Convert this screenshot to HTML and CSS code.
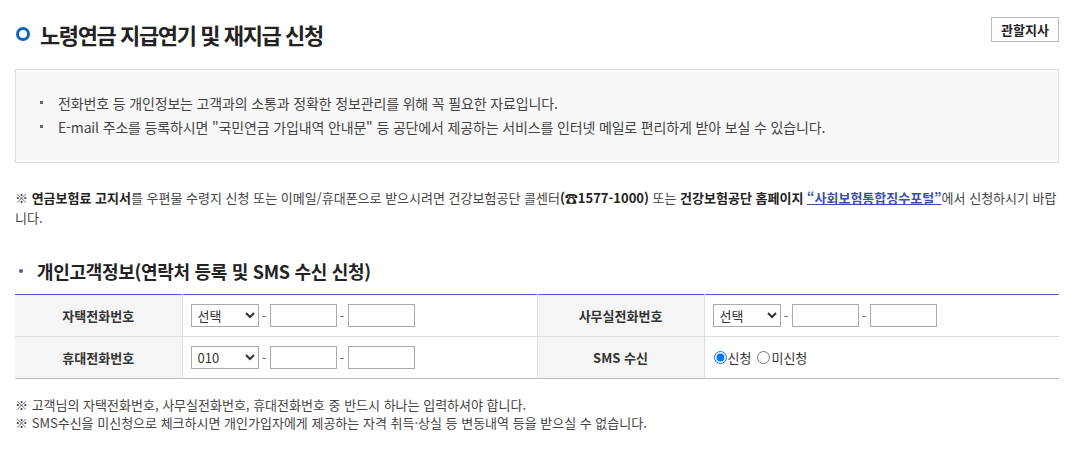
FILE: index.html
```html
<!DOCTYPE html>
<html lang="ko">
<head>
<meta charset="utf-8">
<title>노령연금 지급연기 및 재지급 신청</title>
<link rel="stylesheet" href="styles.css">
</head>
<body>
<div class="page">
  <div class="title-row">
    <h1 class="title"><span class="title-icon"></span>노령연금 지급연기 및 재지급 신청</h1>
    <button class="btn-branch" type="button">관할지사</button>
  </div>

  <div class="info-box">
    <ul class="info-list">
      <li>전화번호 등 개인정보는 고객과의 소통과 정확한 정보관리를 위해 꼭 필요한 자료입니다.</li>
      <li>E-mail 주소를 등록하시면 "국민연금 가입내역 안내문" 등 공단에서 제공하는 서비스를 인터넷 메일로 편리하게 받아 보실 수 있습니다.</li>
    </ul>
  </div>

  <p class="notice">※ <b>연금보험료 고지서</b>를 우편물 수령지 신청 또는 이메일/휴대폰으로 받으시려면 건강보험공단 콜센터<b>(☎1577-1000)</b> 또는 <b>건강보험공단 홈페이지</b> <a class="link" href="#">“사회보험통합징수포털”</a>에서 신청하시기 바랍니다.</p>

  <h2 class="sub-title"><span class="sub-dot"></span>개인고객정보(연락처 등록 및 SMS 수신 신청)</h2>

  <table class="form-table">
    <colgroup>
      <col class="c-th"><col class="c-td"><col class="c-th"><col class="c-td">
    </colgroup>
    <tbody>
      <tr>
        <th>자택전화번호</th>
        <td>
          <div class="phone">
            <select class="sel"><option>선택</option></select>
            <span class="dash">-</span>
            <input class="txt" type="text">
            <span class="dash">-</span>
            <input class="txt" type="text">
          </div>
        </td>
        <th>사무실전화번호</th>
        <td>
          <div class="phone">
            <select class="sel"><option>선택</option></select>
            <span class="dash">-</span>
            <input class="txt" type="text">
            <span class="dash">-</span>
            <input class="txt" type="text">
          </div>
        </td>
      </tr>
      <tr>
        <th>휴대전화번호</th>
        <td>
          <div class="phone">
            <select class="sel"><option>010</option></select>
            <span class="dash">-</span>
            <input class="txt" type="text">
            <span class="dash">-</span>
            <input class="txt" type="text">
          </div>
        </td>
        <th>SMS 수신</th>
        <td>
          <div class="radios">
            <label class="rad"><input type="radio" name="sms" checked>신청</label>
            <label class="rad"><input type="radio" name="sms">미신청</label>
          </div>
        </td>
      </tr>
    </tbody>
  </table>

  <div class="foot-notes">
    <p>※ 고객님의 자택전화번호, 사무실전화번호, 휴대전화번호 중 반드시 하나는 입력하셔야 합니다.</p>
    <p>※ SMS수신을 미신청으로 체크하시면 개인가입자에게 제공하는 자격 취득·상실 등 변동내역 등을 받으실 수 없습니다.</p>
  </div>
</div>
</body>
</html>
```

FILE: styles.css
```css
* { box-sizing: border-box; }
html, body { margin: 0; padding: 0; background: #fff; }
body {
  font-family: "Noto Sans CJK KR", "Noto Sans", sans-serif;
  color: #333;
  font-size: 13px;
}
.page {
  width: 1044px;
  margin-left: 15px;
  padding-top: 17px;
}
.title-row {
  display: flex;
  justify-content: space-between;
  align-items: flex-start;
  height: 52px;
}
.title {
  display: flex;
  align-items: center;
  margin: 0;
  padding-top: 1px;
  font-size: 22px;
  font-weight: 700;
  letter-spacing: -1.4px;
  color: #222;
  line-height: 32px;
}
.title-icon {
  display: inline-block;
  width: 14px;
  height: 14px;
  border: 3px solid #0a66c2;
  border-radius: 50%;
  margin-left: 1px;
  margin-right: 10px;
}
.btn-branch {
  width: 68px;
  height: 25px;
  padding: 0;
  border: 1px solid #bbb;
  background: #fff;
  font-family: inherit;
  font-size: 13px;
  font-weight: 700;
  color: #222;
  line-height: 23px;
}
.info-box {
  border: 1px solid #ddd;
  background: #f8f8f8;
  height: 94px;
  padding: 21px 0 0 24px;
}
.info-list {
  margin: 0;
  padding: 0;
  list-style: none;
}
.info-list li {
  position: relative;
  padding-left: 18px;
  line-height: 24px;
  font-size: 14px;
  letter-spacing: -0.15px;
  color: #444;
}
.info-list li::before {
  content: "";
  position: absolute;
  left: 0;
  top: 10px;
  width: 3px;
  height: 3px;
  background: #666;
}
.notice {
  margin: 25px 0 0;
  line-height: 20px;
  color: #444;
}
.notice b { color: #222; }
.link {
  color: #3a4fa8;
  font-weight: 700;
  text-decoration: underline;
}
.sub-title {
  display: flex;
  align-items: center;
  margin: 30px 0 0;
  font-size: 18px;
  font-weight: 700;
  letter-spacing: -0.3px;
  color: #222;
  line-height: 26px;
}
.sub-dot {
  display: inline-block;
  width: 4px;
  height: 4px;
  border-radius: 50%;
  background: #4a5fae;
  margin-left: 4px;
  margin-right: 14px;
}
.form-table {
  width: 100%;
  margin-top: 10px;
  border-collapse: collapse;
  table-layout: fixed;
  border-top: 1px solid #4b63c0;
  border-bottom: 1px solid #bbb;
}
.c-th { width: 167px; }
.c-td { width: 355px; }
.form-table th, .form-table td {
  height: 42px;
  border-bottom: 1px solid #ddd;
  font-size: 13px;
  vertical-align: middle;
}
.form-table tr:last-child th, .form-table tr:last-child td { border-bottom: 0; }
.form-table th {
  background: #f5f5f5;
  font-weight: 700;
  color: #333;
  text-align: center;
  border-right: 1px solid #ddd;
}
.form-table td {
  padding: 0 8px;
  border-right: 1px solid #ddd;
}
.form-table td:last-child { border-right: 0; }
.phone {
  display: flex;
  align-items: center;
}
.sel {
  width: 68px;
  height: 23px;
  border: 1px solid #aaa;
  border-radius: 0;
  background: #fff;
  font-family: "Noto Sans CJK KR", sans-serif;
  font-size: 13px;
  color: #333;
  padding: 0 2px;
}
.dash {
  width: 11px;
  text-align: center;
  color: #555;
  font-size: 12px;
}
.txt {
  width: 67px;
  height: 23px;
  border: 1px solid #aaa;
  border-radius: 0;
  background: #fff;
  padding: 0 3px;
}
.radios {
  display: flex;
  align-items: center;
  padding-left: 1px;
}
.rad {
  display: inline-flex;
  align-items: center;
  margin-right: 6px;
  font-size: 13px;
  color: #333;
}
.rad input {
  margin: 0 1px 0 0;
  width: 13px;
  height: 13px;
}
.foot-notes {
  margin-top: 17px;
  color: #444;
}
.foot-notes p {
  margin: 0;
  line-height: 18px;
}
```
